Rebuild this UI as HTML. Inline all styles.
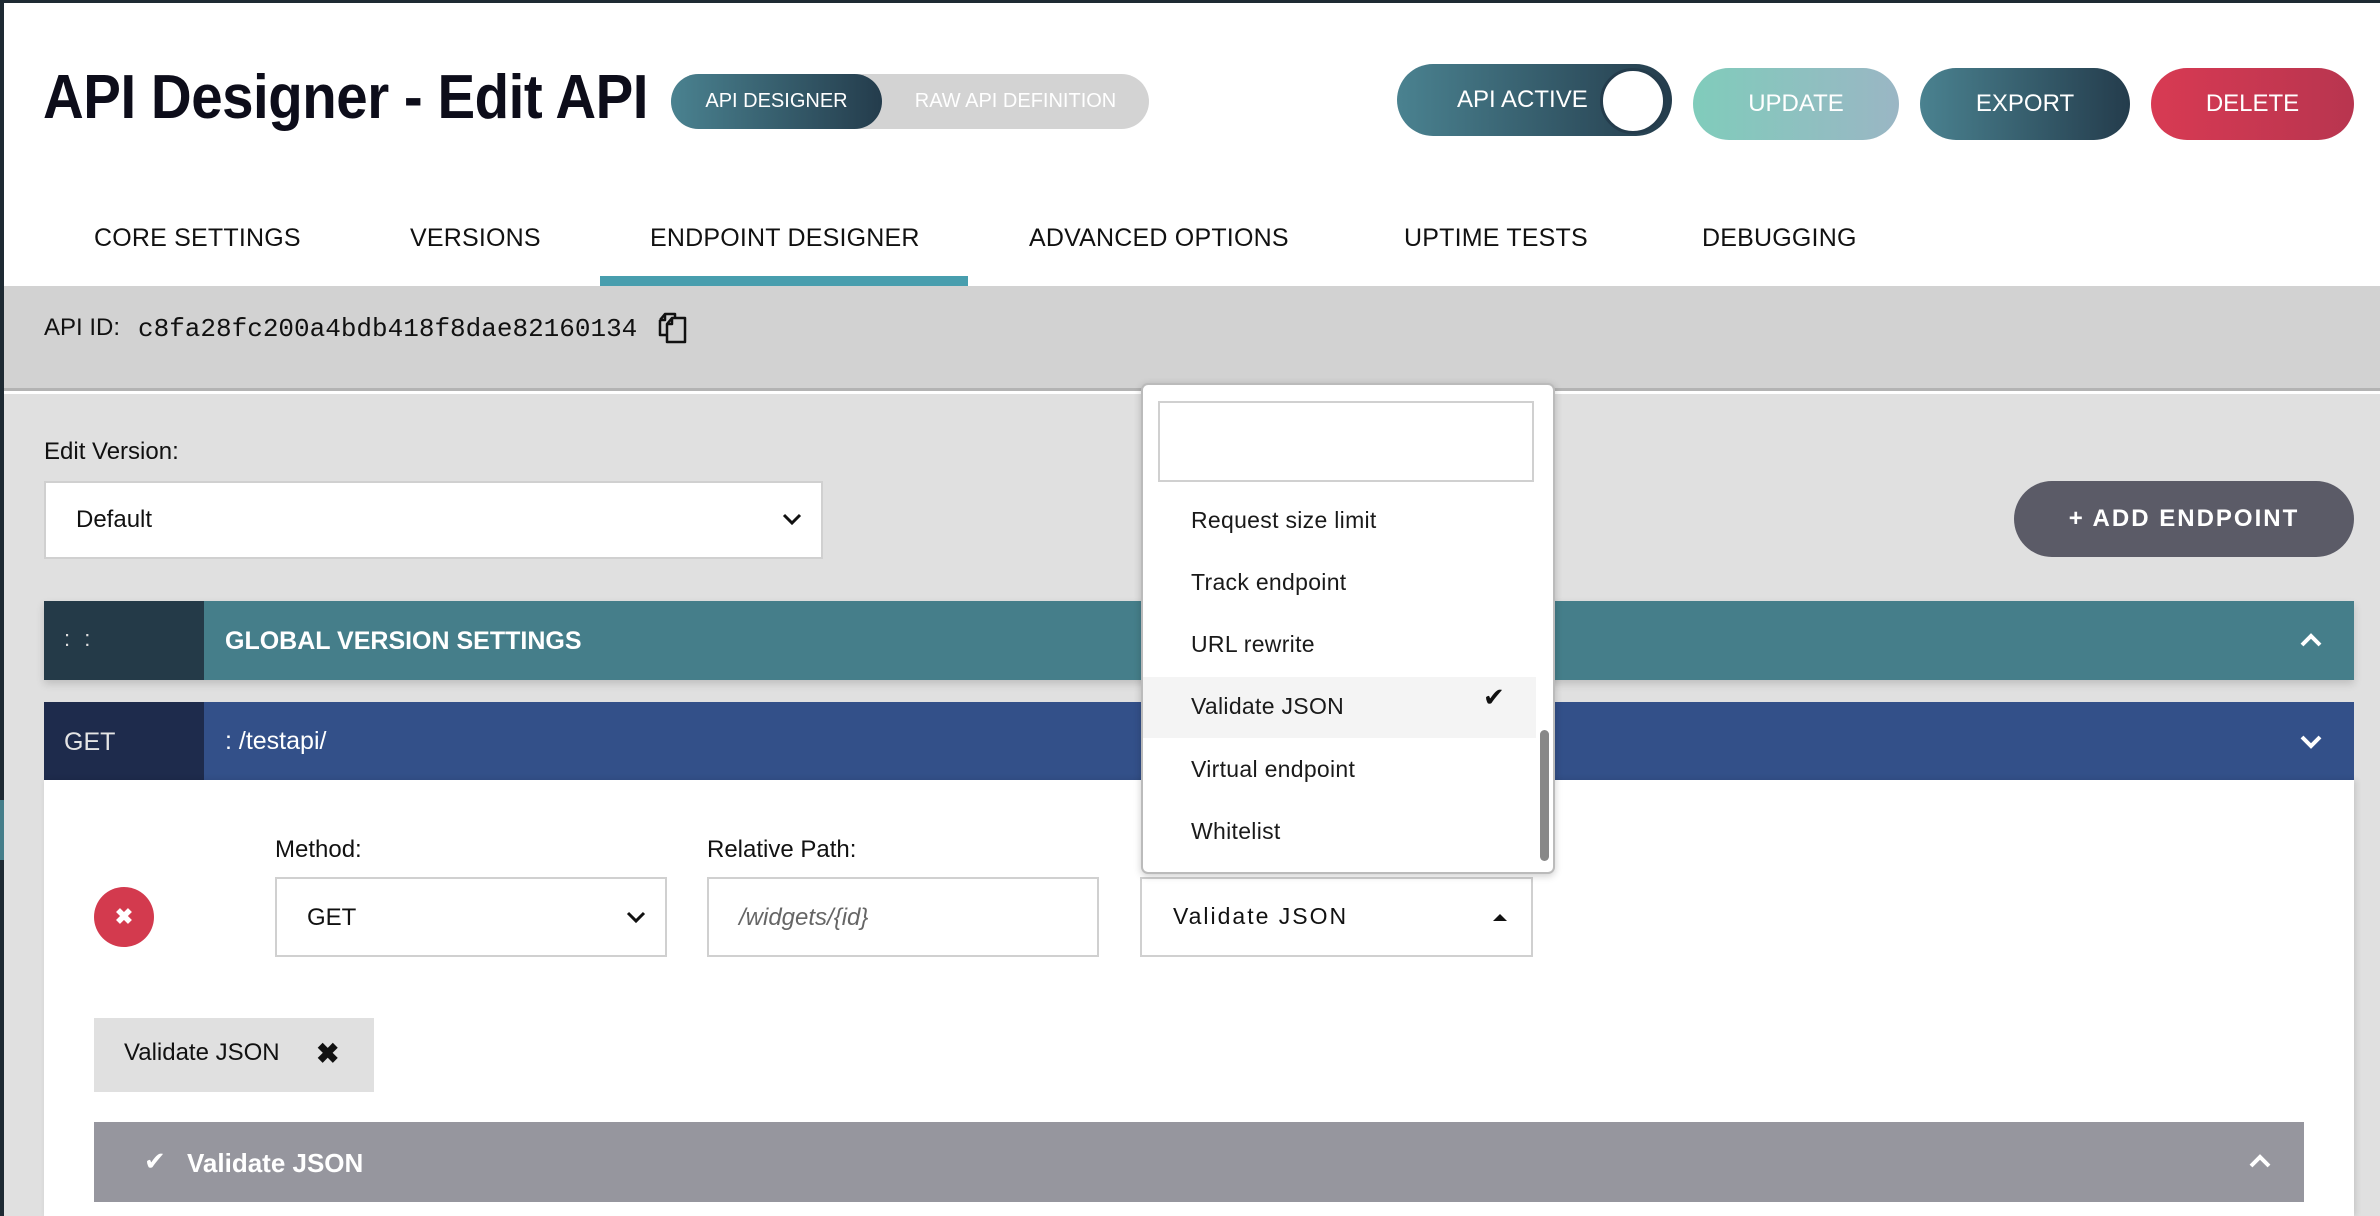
<!DOCTYPE html>
<html><head><meta charset="utf-8"><style>
*{margin:0;padding:0;box-sizing:border-box}
body{width:2380px;height:1216px;position:relative;overflow:hidden;background:#fff;font-family:"Liberation Sans",sans-serif;color:#111}
.a{position:absolute}
.btn{position:absolute;border-radius:40px;color:#fff;font-size:24px;display:flex;align-items:center;justify-content:center}
.tab{position:absolute;top:224px;font-size:25px;letter-spacing:0.2px;color:#111}
.item{position:absolute;left:1191px;font-size:23px;color:#1a1a1a;letter-spacing:0.3px}
</style></head><body>
<div class="a" style="left:0;top:0;width:2380px;height:3px;background:#1e2a33"></div>
<div class="a" style="left:0;top:0;width:4px;height:1216px;background:#1e2a33"></div>
<div class="a" style="left:0;top:800px;width:4px;height:60px;background:#457e8a"></div>

<div class="a" style="left:43px;top:62px;font-size:62px;font-weight:bold;letter-spacing:-0.5px;color:#0d0d1a;transform:scaleX(0.91);transform-origin:left top;white-space:nowrap">API Designer - Edit API</div>

<div class="a" style="left:671px;top:74px;width:478px;height:55px;border-radius:28px;background:#d3d3d3"></div>
<div class="a" style="left:671px;top:74px;width:211px;height:55px;border-radius:28px;background:linear-gradient(90deg,#4a8290,#243c4c);color:#fff;font-size:20px;display:flex;align-items:center;justify-content:center">API DESIGNER</div>
<div class="a" style="left:882px;top:74px;width:267px;height:55px;color:#fff;font-size:20px;display:flex;align-items:center;justify-content:center">RAW API DEFINITION</div>

<div class="btn" style="left:1397px;top:64px;width:275px;height:72px;background:linear-gradient(90deg,#4a8290,#243c4c);justify-content:flex-start;padding-left:60px">API ACTIVE</div>
<div class="a" style="left:1600px;top:68px;width:66px;height:66px;border-radius:50%;background:#fff;border:3px solid #243c4c"></div>
<div class="btn" style="left:1693px;top:68px;width:206px;height:72px;background:linear-gradient(90deg,#80ccbb,#9ab6c4)">UPDATE</div>
<div class="btn" style="left:1920px;top:68px;width:210px;height:72px;background:linear-gradient(90deg,#4a8290,#243c4c)">EXPORT</div>
<div class="btn" style="left:2151px;top:68px;width:203px;height:72px;background:linear-gradient(90deg,#d83a53,#b8354f)">DELETE</div>

<div class="tab" style="left:94px">CORE SETTINGS</div>
<div class="tab" style="left:410px">VERSIONS</div>
<div class="tab" style="left:650px">ENDPOINT DESIGNER</div>
<div class="tab" style="left:1029px">ADVANCED OPTIONS</div>
<div class="tab" style="left:1404px">UPTIME TESTS</div>
<div class="tab" style="left:1702px">DEBUGGING</div>

<div class="a" style="left:4px;top:286px;width:2376px;height:105px;background:#d2d2d2;border-bottom:3px solid #b3b3b3"></div>
<div class="a" style="left:600px;top:276px;width:368px;height:10px;background:#489eae"></div>
<div class="a" style="left:44px;top:314px;font-size:24px;color:#111">API ID:</div>
<div class="a" style="left:138px;top:314px;font-size:26px;font-family:'Liberation Mono',monospace;color:#111">c8fa28fc200a4bdb418f8dae82160134</div>
<svg class="a" style="left:656px;top:310px" width="34" height="34" viewBox="0 0 34 34"><path d="M4 10 L9 4 H19 V10 M4 10 V25 H11 M4 10 H9 V4" fill="none" stroke="#111" stroke-width="2.5" stroke-linejoin="round"/><path d="M11 16 L16 10 H29 V34 H11 Z M11 16 H16 V10" fill="#d2d2d2" stroke="#111" stroke-width="2.5" stroke-linejoin="round" transform="translate(0,-2)"/></svg>

<div class="a" style="left:4px;top:394px;width:2376px;height:822px;background:#e0e0e0"></div>
<div class="a" style="left:44px;top:438px;font-size:24px;color:#111">Edit Version:</div>
<div class="a" style="left:44px;top:481px;width:779px;height:78px;background:#fff;border:2px solid #d0d0d0"></div>
<div class="a" style="left:76px;top:506px;font-size:24px">Default</div>
<svg class="a" style="left:782px;top:512px" width="20" height="14" viewBox="0 0 20 14"><path d="M2 3 L10 11 L18 3" fill="none" stroke="#111" stroke-width="3"/></svg>

<div class="btn" style="left:2014px;top:481px;width:340px;height:76px;background:#5b5b67;font-weight:bold;letter-spacing:2px">+ ADD ENDPOINT</div>

<div class="a" style="left:44px;top:601px;width:2310px;height:79px;background:#457e8a;box-shadow:0 4px 8px rgba(0,0,0,0.15)"></div>
<div class="a" style="left:44px;top:601px;width:160px;height:79px;background:#243a48"></div>
<div class="a" style="left:64px;top:626px;font-size:22px;color:#ddd;letter-spacing:4px">: :</div>
<div class="a" style="left:225px;top:627px;font-size:25px;font-weight:bold;color:#fff">GLOBAL VERSION SETTINGS</div>
<svg class="a" style="left:2299px;top:632px" width="24" height="16" viewBox="0 0 24 16"><path d="M3 13 L12 4 L21 13" fill="none" stroke="#fff" stroke-width="4"/></svg>

<div class="a" style="left:44px;top:702px;width:2310px;height:78px;background:#335089"></div>
<div class="a" style="left:44px;top:702px;width:160px;height:78px;background:#1e2b4c"></div>
<div class="a" style="left:64px;top:728px;font-size:25px;color:#e5e5e5">GET</div>
<div class="a" style="left:225px;top:727px;font-size:25px;color:#fff">: /testapi/</div>
<svg class="a" style="left:2299px;top:734px" width="24" height="16" viewBox="0 0 24 16"><path d="M3 3 L12 12 L21 3" fill="none" stroke="#fff" stroke-width="4"/></svg>

<div class="a" style="left:44px;top:780px;width:2310px;height:436px;background:#fff;box-shadow:2px 0 6px rgba(0,0,0,0.12)"></div>
<div class="a" style="left:94px;top:887px;width:60px;height:60px;border-radius:50%;background:#d33a4e;color:#fff;font-size:22px;font-weight:bold;display:flex;align-items:center;justify-content:center">✖</div>
<div class="a" style="left:275px;top:836px;font-size:24px">Method:</div>
<div class="a" style="left:275px;top:877px;width:392px;height:80px;border:2px solid #d0d0d0"></div>
<div class="a" style="left:307px;top:904px;font-size:24px">GET</div>
<svg class="a" style="left:626px;top:910px" width="20" height="14" viewBox="0 0 20 14"><path d="M2 3 L10 11 L18 3" fill="none" stroke="#111" stroke-width="3"/></svg>
<div class="a" style="left:707px;top:836px;font-size:24px">Relative Path:</div>
<div class="a" style="left:707px;top:877px;width:392px;height:80px;border:2px solid #d0d0d0"></div>
<div class="a" style="left:739px;top:904px;font-size:24px;font-style:italic;color:#666">/widgets/{id}</div>
<div class="a" style="left:1140px;top:877px;width:393px;height:80px;border:2px solid #d0d0d0"></div>
<div class="a" style="left:1173px;top:903px;font-size:23px;letter-spacing:2px;color:#111">Validate JSON</div>
<svg class="a" style="left:1491px;top:912px" width="18" height="10" viewBox="0 0 18 10"><path d="M2 9 L9 2 L16 9 Z" fill="#111"/></svg>

<div class="a" style="left:94px;top:1018px;width:280px;height:74px;background:#e0e0e0"></div>
<div class="a" style="left:124px;top:1039px;font-size:24px">Validate JSON</div>
<div class="a" style="left:316px;top:1037px;font-size:28px;font-weight:bold">✖</div>

<div class="a" style="left:94px;top:1122px;width:2210px;height:80px;background:#96969e"></div>
<div class="a" style="left:144px;top:1146px;font-size:26px;color:#fff">✔</div>
<div class="a" style="left:187px;top:1148px;font-size:26px;font-weight:bold;color:#fff">Validate JSON</div>
<svg class="a" style="left:2248px;top:1153px" width="24" height="16" viewBox="0 0 24 16"><path d="M3 13 L12 4 L21 13" fill="none" stroke="#fff" stroke-width="4"/></svg>

<div class="a" style="left:1141px;top:383px;width:414px;height:491px;background:#fff;border:2px solid #bbb;border-radius:7px;box-shadow:0 2px 8px rgba(0,0,0,0.2)"></div>
<div class="a" style="left:1158px;top:401px;width:376px;height:81px;border:2px solid #d0d0d0"></div>
<div class="a" style="left:1143px;top:677px;width:393px;height:61px;background:#f4f4f4"></div>
<div class="item" style="top:507px">Request size limit</div>
<div class="item" style="top:569px">Track endpoint</div>
<div class="item" style="top:631px">URL rewrite</div>
<div class="item" style="top:693px">Validate JSON</div>
<div class="item" style="top:756px">Virtual endpoint</div>
<div class="item" style="top:818px">Whitelist</div>
<div class="a" style="left:1483px;top:682px;font-size:26px;color:#111">✔</div>
<div class="a" style="left:1540px;top:730px;width:9px;height:131px;border-radius:5px;background:#888"></div>
</body></html>
